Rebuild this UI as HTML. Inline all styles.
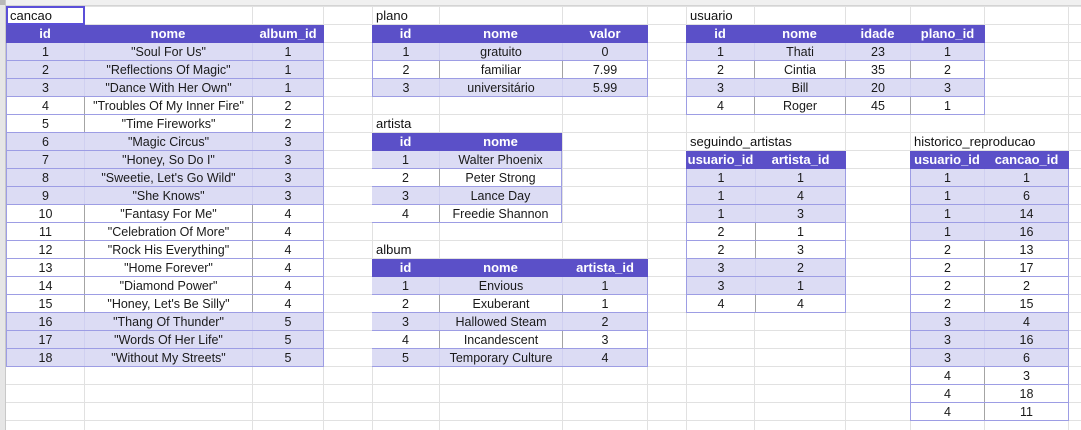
<!DOCTYPE html>
<html><head><meta charset="utf-8"><style>
body{margin:0;width:1081px;height:430px;overflow:hidden;background:#fff;position:relative;font-family:"Liberation Sans",Arial,sans-serif;}
.grid{position:absolute;left:0;top:0;width:1081px;height:430px;
background-image:repeating-linear-gradient(to bottom,transparent 0,transparent 6px,#e1e1e1 6px,#e1e1e1 7px,transparent 7px,transparent 18px);}
.v{position:absolute;top:0;width:1px;height:430px;background:#e1e1e1}
.lb{position:absolute;left:0;top:0;width:5px;height:430px;background:#e6e6e6;border-right:1px solid #c8c8c8}
.tb{position:absolute;left:0;top:0;width:1081px;height:5px;background:#f0f0f0;border-bottom:1px solid #d4d4d4}
.corner{position:absolute;left:0;top:0;width:5px;height:5px;background:#b8b8b8}
.title{position:absolute;font-size:13px;color:#111;height:17px;line-height:18px;padding-left:3px;background:#fff;box-sizing:border-box}
.t{position:absolute;font-size:12.5px;color:#1a1a1a}
.r{display:flex;height:18px;box-sizing:border-box;border-bottom:1px solid #9d9de4}
.c{text-align:center;line-height:18px;box-sizing:border-box;white-space:nowrap;overflow:hidden}
.h{background:#5b50c8;color:#fff;font-weight:bold;border-bottom:none;font-size:13px}
.l{background:#dcdcf4}
.w{background:#fff}
.w .c+.c{border-left:1px solid #a4a4a4}
.l .c+.c{border-left:1px solid #d0d0f0}
.d{border-left:1px solid #9d9de4;border-right:1px solid #9d9de4}
</style></head><body>
<div class="grid"></div>
<div class="v" style="left:84px"></div><div class="v" style="left:252px"></div><div class="v" style="left:323px"></div><div class="v" style="left:372px"></div><div class="v" style="left:439px"></div><div class="v" style="left:562px"></div><div class="v" style="left:647px"></div><div class="v" style="left:686px"></div><div class="v" style="left:754px"></div><div class="v" style="left:845px"></div><div class="v" style="left:910px"></div><div class="v" style="left:984px"></div><div class="v" style="left:1068px"></div>
<div class="tb"></div><div class="lb"></div><div class="corner"></div>

<div class="title" style="left:6px;top:6px;width:79px;height:19px;border:2px solid #5b4fd8;line-height:15px;padding-left:2px">cancao</div>
<div class="title" style="left:373px;top:7px;width:60px">plano</div>
<div class="title" style="left:687px;top:7px;width:66px">usuario</div>
<div class="title" style="left:373px;top:115px;width:60px">artista</div>
<div class="title" style="left:373px;top:241px;width:60px">album</div>
<div class="title" style="left:687px;top:133px;width:150px">seguindo_artistas</div>
<div class="title" style="left:911px;top:133px;width:150px">historico_reproducao</div>

<!-- cancao -->
<div class="t" style="left:6px;top:25px;width:318px">
<div class="r h"><div class="c" style="width:78px">id</div><div class="c" style="width:168px">nome</div><div class="c" style="width:72px">album_id</div></div>
<div class="d">
<div class="r l"><div class="c" style="width:77px">1</div><div class="c" style="width:168px">"Soul For Us"</div><div class="c" style="width:71px">1</div></div>
<div class="r l"><div class="c" style="width:77px">2</div><div class="c" style="width:168px">"Reflections Of Magic"</div><div class="c" style="width:71px">1</div></div>
<div class="r l"><div class="c" style="width:77px">3</div><div class="c" style="width:168px">"Dance With Her Own"</div><div class="c" style="width:71px">1</div></div>
<div class="r w"><div class="c" style="width:77px">4</div><div class="c" style="width:168px">"Troubles Of My Inner Fire"</div><div class="c" style="width:71px">2</div></div>
<div class="r w"><div class="c" style="width:77px">5</div><div class="c" style="width:168px">"Time Fireworks"</div><div class="c" style="width:71px">2</div></div>
<div class="r l"><div class="c" style="width:77px">6</div><div class="c" style="width:168px">"Magic Circus"</div><div class="c" style="width:71px">3</div></div>
<div class="r l"><div class="c" style="width:77px">7</div><div class="c" style="width:168px">"Honey, So Do I"</div><div class="c" style="width:71px">3</div></div>
<div class="r l"><div class="c" style="width:77px">8</div><div class="c" style="width:168px">"Sweetie, Let's Go Wild"</div><div class="c" style="width:71px">3</div></div>
<div class="r l"><div class="c" style="width:77px">9</div><div class="c" style="width:168px">"She Knows"</div><div class="c" style="width:71px">3</div></div>
<div class="r w"><div class="c" style="width:77px">10</div><div class="c" style="width:168px">"Fantasy For Me"</div><div class="c" style="width:71px">4</div></div>
<div class="r w"><div class="c" style="width:77px">11</div><div class="c" style="width:168px">"Celebration Of More"</div><div class="c" style="width:71px">4</div></div>
<div class="r w"><div class="c" style="width:77px">12</div><div class="c" style="width:168px">"Rock His Everything"</div><div class="c" style="width:71px">4</div></div>
<div class="r w"><div class="c" style="width:77px">13</div><div class="c" style="width:168px">"Home Forever"</div><div class="c" style="width:71px">4</div></div>
<div class="r w"><div class="c" style="width:77px">14</div><div class="c" style="width:168px">"Diamond Power"</div><div class="c" style="width:71px">4</div></div>
<div class="r w"><div class="c" style="width:77px">15</div><div class="c" style="width:168px">"Honey, Let's Be Silly"</div><div class="c" style="width:71px">4</div></div>
<div class="r l"><div class="c" style="width:77px">16</div><div class="c" style="width:168px">"Thang Of Thunder"</div><div class="c" style="width:71px">5</div></div>
<div class="r l"><div class="c" style="width:77px">17</div><div class="c" style="width:168px">"Words Of Her Life"</div><div class="c" style="width:71px">5</div></div>
<div class="r l"><div class="c" style="width:77px">18</div><div class="c" style="width:168px">"Without My Streets"</div><div class="c" style="width:71px">5</div></div>
</div></div>

<!-- plano -->
<div class="t" style="left:372px;top:25px;width:276px">
<div class="r h"><div class="c" style="width:67px">id</div><div class="c" style="width:123px">nome</div><div class="c" style="width:86px">valor</div></div>
<div class="d">
<div class="r l"><div class="c" style="width:66px">1</div><div class="c" style="width:123px">gratuito</div><div class="c" style="width:85px">0</div></div>
<div class="r w"><div class="c" style="width:66px">2</div><div class="c" style="width:123px">familiar</div><div class="c" style="width:85px">7.99</div></div>
<div class="r l"><div class="c" style="width:66px">3</div><div class="c" style="width:123px">universitário</div><div class="c" style="width:85px">5.99</div></div>
</div></div>

<!-- usuario -->
<div class="t" style="left:686px;top:25px;width:299px">
<div class="r h"><div class="c" style="width:68px">id</div><div class="c" style="width:91px">nome</div><div class="c" style="width:65px">idade</div><div class="c" style="width:75px">plano_id</div></div>
<div class="d">
<div class="r l"><div class="c" style="width:67px">1</div><div class="c" style="width:91px">Thati</div><div class="c" style="width:65px">23</div><div class="c" style="width:74px">1</div></div>
<div class="r w"><div class="c" style="width:67px">2</div><div class="c" style="width:91px">Cintia</div><div class="c" style="width:65px">35</div><div class="c" style="width:74px">2</div></div>
<div class="r l"><div class="c" style="width:67px">3</div><div class="c" style="width:91px">Bill</div><div class="c" style="width:65px">20</div><div class="c" style="width:74px">3</div></div>
<div class="r w"><div class="c" style="width:67px">4</div><div class="c" style="width:91px">Roger</div><div class="c" style="width:65px">45</div><div class="c" style="width:74px">1</div></div>
</div></div>

<!-- artista -->
<div class="t" style="left:372px;top:133px;width:190px">
<div class="r h"><div class="c" style="width:67px">id</div><div class="c" style="width:123px">nome</div></div>
<div style="border-right:1px solid #9d9de4">
<div class="r l"><div class="c" style="width:67px">1</div><div class="c" style="width:122px">Walter Phoenix</div></div>
<div class="r w"><div class="c" style="width:67px">2</div><div class="c" style="width:122px">Peter Strong</div></div>
<div class="r l"><div class="c" style="width:67px">3</div><div class="c" style="width:122px">Lance Day</div></div>
<div class="r w"><div class="c" style="width:67px">4</div><div class="c" style="width:122px">Freedie Shannon</div></div>
</div></div>

<!-- album -->
<div class="t" style="left:372px;top:259px;width:276px">
<div class="r h"><div class="c" style="width:67px">id</div><div class="c" style="width:123px">nome</div><div class="c" style="width:86px">artista_id</div></div>
<div style="border-right:1px solid #9d9de4">
<div class="r l"><div class="c" style="width:67px">1</div><div class="c" style="width:123px">Envious</div><div class="c" style="width:85px">1</div></div>
<div class="r w"><div class="c" style="width:67px">2</div><div class="c" style="width:123px">Exuberant</div><div class="c" style="width:85px">1</div></div>
<div class="r l"><div class="c" style="width:67px">3</div><div class="c" style="width:123px">Hallowed Steam</div><div class="c" style="width:85px">2</div></div>
<div class="r w"><div class="c" style="width:67px">4</div><div class="c" style="width:123px">Incandescent</div><div class="c" style="width:85px">3</div></div>
<div class="r l"><div class="c" style="width:67px">5</div><div class="c" style="width:123px">Temporary Culture</div><div class="c" style="width:85px">4</div></div>
</div></div>

<!-- seguindo_artistas -->
<div class="t" style="left:686px;top:151px;width:160px">
<div class="r h"><div class="c" style="width:69px">usuario_id</div><div class="c" style="width:91px">artista_id</div></div>
<div class="d">
<div class="r l"><div class="c" style="width:68px">1</div><div class="c" style="width:90px">1</div></div>
<div class="r l"><div class="c" style="width:68px">1</div><div class="c" style="width:90px">4</div></div>
<div class="r l"><div class="c" style="width:68px">1</div><div class="c" style="width:90px">3</div></div>
<div class="r w"><div class="c" style="width:68px">2</div><div class="c" style="width:90px">1</div></div>
<div class="r w"><div class="c" style="width:68px">2</div><div class="c" style="width:90px">3</div></div>
<div class="r l"><div class="c" style="width:68px">3</div><div class="c" style="width:90px">2</div></div>
<div class="r l"><div class="c" style="width:68px">3</div><div class="c" style="width:90px">1</div></div>
<div class="r w"><div class="c" style="width:68px">4</div><div class="c" style="width:90px">4</div></div>
</div></div>

<!-- historico_reproducao -->
<div class="t" style="left:910px;top:151px;width:159px">
<div class="r h"><div class="c" style="width:74px">usuario_id</div><div class="c" style="width:85px">cancao_id</div></div>
<div class="d">
<div class="r l"><div class="c" style="width:73px">1</div><div class="c" style="width:84px">1</div></div>
<div class="r l"><div class="c" style="width:73px">1</div><div class="c" style="width:84px">6</div></div>
<div class="r l"><div class="c" style="width:73px">1</div><div class="c" style="width:84px">14</div></div>
<div class="r l"><div class="c" style="width:73px">1</div><div class="c" style="width:84px">16</div></div>
<div class="r w"><div class="c" style="width:73px">2</div><div class="c" style="width:84px">13</div></div>
<div class="r w"><div class="c" style="width:73px">2</div><div class="c" style="width:84px">17</div></div>
<div class="r w"><div class="c" style="width:73px">2</div><div class="c" style="width:84px">2</div></div>
<div class="r w"><div class="c" style="width:73px">2</div><div class="c" style="width:84px">15</div></div>
<div class="r l"><div class="c" style="width:73px">3</div><div class="c" style="width:84px">4</div></div>
<div class="r l"><div class="c" style="width:73px">3</div><div class="c" style="width:84px">16</div></div>
<div class="r l"><div class="c" style="width:73px">3</div><div class="c" style="width:84px">6</div></div>
<div class="r w"><div class="c" style="width:73px">4</div><div class="c" style="width:84px">3</div></div>
<div class="r w"><div class="c" style="width:73px">4</div><div class="c" style="width:84px">18</div></div>
<div class="r w"><div class="c" style="width:73px">4</div><div class="c" style="width:84px">11</div></div>
</div></div>
</body></html>
